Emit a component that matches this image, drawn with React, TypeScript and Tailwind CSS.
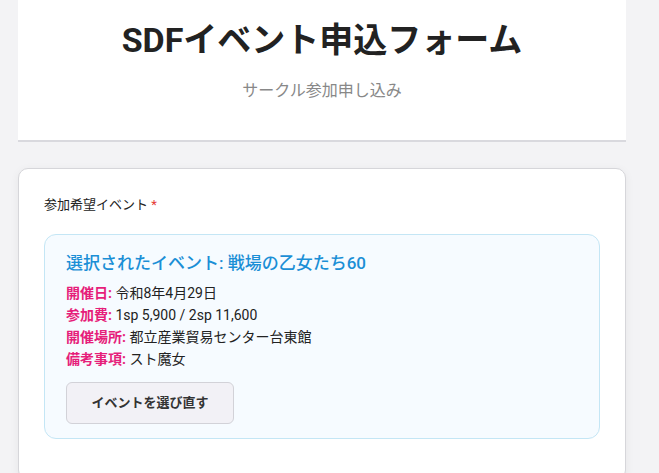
export default function App() {
  return (
    <div className="min-h-[473px] bg-[#f3f3f5] pl-[18px] font-['Roboto','Noto_Sans_CJK_JP',sans-serif] text-[#222]">
      <div className="w-[608px]">
        <header className="flex h-[142px] flex-col items-center border-b-2 border-[#d9d9de] bg-white pt-[16px]">
          <h1 className="text-[34px] font-bold leading-[48px] text-[#222]">SDFイベント申込フォーム</h1>
          <p className="mt-[15px] text-[16px] leading-[24px] text-[#888]">サークル参加申し込み</p>
        </header>
        <div className="mt-[26px] rounded-[10px] border border-[#d6d6da] bg-white px-[25px] pt-[26px] pb-[40px] shadow-[0_2px_10px_rgba(0,0,0,0.06)]">
          <label className="block text-[13px] leading-[20px] text-[#222]">
            参加希望イベント <span className="text-[#e53935]">*</span>
          </label>
          <div className="mt-[19px] rounded-[12px] border border-[#c4e6f5] bg-[#f6fbff] px-[21px] pt-[14px] pb-[14px]">
            <h2 className="text-[17px] font-medium leading-[28px] text-[#1b8fd6]">選択されたイベント: 戦場の乙女たち60</h2>
            <div className="mt-[5px] text-[14px] leading-[22px]">
              <p><span className="font-bold text-[#e61e7a]">開催日:</span> 令和8年4月29日</p>
              <p><span className="font-bold text-[#e61e7a]">参加費:</span> 1sp 5,900 / 2sp 11,600</p>
              <p><span className="font-bold text-[#e61e7a]">開催場所:</span> 都立産業貿易センター台東館</p>
              <p><span className="font-bold text-[#e61e7a]">備考事項:</span> スト魔女</p>
            </div>
            <button className="mt-[12px] h-[42px] w-[168px] rounded-[6px] border border-[#d2d2d8] bg-[#f2f1f6] text-[13px] font-bold text-[#333]">
              イベントを選び直す
            </button>
          </div>
        </div>
      </div>
    </div>
  );
}
